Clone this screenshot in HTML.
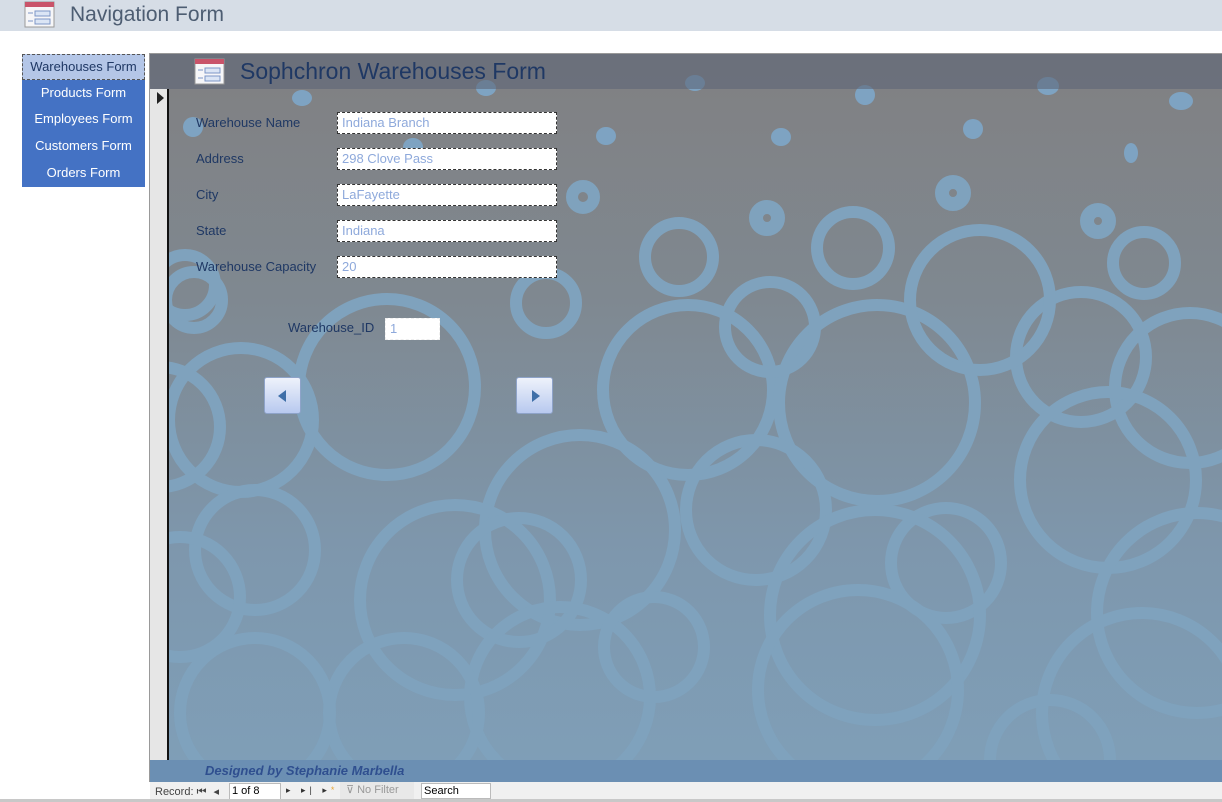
<!DOCTYPE html>
<html><head><meta charset="utf-8"><style>
body{margin:0;width:1222px;height:802px;position:relative;overflow:hidden;background:#fff;font-family:"Liberation Sans","DejaVu Sans",sans-serif}
.abs{position:absolute}
#top{left:0;top:0;width:1222px;height:31px;background:#d6dde6}
#top .t{left:70px;top:3px;font-size:21px;color:#4d5d72}
.nav{left:22px;width:123px;height:27px;line-height:26px;text-align:center;color:#fff;font-size:13px;background:#4472c4}
.lbl{font-size:13px;color:#1f3864;left:196px}
.box{left:337px;height:22px;background:#fff;border:1px dashed #333;font-size:13px;color:#8ea9db;line-height:20px;padding-left:4px;box-sizing:border-box;width:220px}
.btn{width:37px;height:37px;border:1px solid #8ea3c9;border-radius:3px;background:linear-gradient(#eef2fb,#b8c9ef);box-sizing:border-box}
</style></head><body>
<div id="top" class="abs">
<svg class="abs" style="left:24px;top:1px" width="32" height="28"><rect x="1" y="1" width="29" height="25" fill="#f6f6f8" stroke="#999"/><rect x="1" y="1" width="29" height="5" fill="#c9546a"/><rect x="11" y="10" width="15" height="5" fill="#dbe5f5" stroke="#7d97c6"/><rect x="11" y="18" width="15" height="5" fill="#dbe5f5" stroke="#7d97c6"/><line x1="4" y1="12" x2="9" y2="12" stroke="#7d97c6"/><line x1="4" y1="20" x2="9" y2="20" stroke="#7d97c6"/></svg>
<div class="abs t">Navigation Form</div></div>

<div class="abs nav" style="top:54px;background:#b4c6e7;color:#1f3864;border:1px dashed #555;box-sizing:border-box;height:26px;line-height:24px">Warehouses Form</div>
<div class="abs nav" style="top:80px">Products Form</div>
<div class="abs nav" style="top:106px">Employees Form</div>
<div class="abs nav" style="top:133px">Customers Form</div>
<div class="abs nav" style="top:160px">Orders Form</div>

<div class="abs" style="left:149px;top:53px;width:1073px;height:729px;border-top:1px solid #999;border-left:1px solid #999;box-sizing:border-box;background:linear-gradient(#808082 0px,#7f8890 240px,#7e97ad 500px,#7f9fb8 729px)"></div>
<svg class="abs" style="left:150px;top:54px" width="1072" height="706">
<g transform="translate(-150,-54)" fill="none" stroke="#7fa2bd" stroke-width="12">
<circle cx="387" cy="387" r="88"/><circle cx="688" cy="390" r="85"/><circle cx="877" cy="403" r="98"/>
<circle cx="1190" cy="388" r="75"/><circle cx="1081" cy="357" r="65"/><circle cx="770" cy="327" r="45"/>
<circle cx="546" cy="303" r="30"/><circle cx="194" cy="300" r="28"/><circle cx="241" cy="420" r="72"/>
<circle cx="580" cy="530" r="95"/><circle cx="1108" cy="480" r="88"/><circle cx="756" cy="510" r="70"/>
<circle cx="255" cy="550" r="60"/><circle cx="455" cy="600" r="95"/><circle cx="519" cy="580" r="62"/>
<circle cx="946" cy="563" r="55"/><circle cx="875" cy="615" r="105"/><circle cx="1197" cy="613" r="100"/>
<circle cx="858" cy="690" r="100"/><circle cx="560" cy="697" r="90"/><circle cx="654" cy="647" r="50"/>
<circle cx="404" cy="713" r="75"/><circle cx="255" cy="713" r="75"/><circle cx="1142" cy="713" r="100"/>
<circle cx="160" cy="427" r="60"/><circle cx="180" cy="597" r="60"/><circle cx="1050" cy="760" r="60"/>
<circle cx="679" cy="257" r="34"/><circle cx="853" cy="248" r="36"/><circle cx="980" cy="300" r="70"/>
<circle cx="1144" cy="263" r="31"/><circle cx="185" cy="285" r="30"/><circle cx="583" cy="197" r="11"/>
<circle cx="767" cy="218" r="11" stroke-width="14"/><circle cx="953" cy="193" r="11" stroke-width="14"/><circle cx="1098" cy="221" r="11" stroke-width="14"/>
</g>
<g transform="translate(-150,-54)" fill="#7ea3c2">
<ellipse cx="302" cy="98" rx="10" ry="8"/><ellipse cx="486" cy="88" rx="10" ry="8"/><ellipse cx="606" cy="136" rx="10" ry="9"/>
<ellipse cx="695" cy="83" rx="10" ry="8"/><ellipse cx="781" cy="137" rx="10" ry="9"/><ellipse cx="865" cy="95" rx="10" ry="10"/>
<ellipse cx="973" cy="129" rx="10" ry="10"/><ellipse cx="1048" cy="86" rx="11" ry="9"/><ellipse cx="1181" cy="101" rx="12" ry="9"/>
<ellipse cx="1131" cy="153" rx="7" ry="10"/><ellipse cx="193" cy="127" rx="10" ry="10"/><ellipse cx="413" cy="147" rx="10" ry="9"/>
</g>
<rect x="0" y="0" width="1072" height="35" fill="#5e6677" opacity="0.6"/>
</svg>
<svg class="abs" style="left:194px;top:58px" width="32" height="28"><rect x="1" y="1" width="29" height="25" fill="#f6f6f8" stroke="#999"/><rect x="1" y="1" width="29" height="5" fill="#c9546a"/><rect x="11" y="10" width="15" height="5" fill="#dbe5f5" stroke="#7d97c6"/><rect x="11" y="18" width="15" height="5" fill="#dbe5f5" stroke="#7d97c6"/><line x1="4" y1="12" x2="9" y2="12" stroke="#7d97c6"/><line x1="4" y1="20" x2="9" y2="20" stroke="#7d97c6"/></svg>
<div class="abs" style="left:240px;top:58px;font-size:23px;color:#1f3864">Sophchron Warehouses Form</div>

<div class="abs" style="left:150px;top:89px;width:19px;height:671px;background:#e6e6e6;border-right:2px solid #111;box-sizing:border-box"></div>
<div class="abs" style="left:157px;top:92px;width:0;height:0;border-left:7px solid #222;border-top:6px solid transparent;border-bottom:6px solid transparent"></div>

<div class="abs lbl" style="top:115px">Warehouse Name</div>
<div class="abs lbl" style="top:151px">Address</div>
<div class="abs lbl" style="top:187px">City</div>
<div class="abs lbl" style="top:223px">State</div>
<div class="abs lbl" style="top:259px">Warehouse Capacity</div>
<div class="abs box" style="top:112px">Indiana Branch</div>
<div class="abs box" style="top:148px">298 Clove Pass</div>
<div class="abs box" style="top:184px">LaFayette</div>
<div class="abs box" style="top:220px">Indiana</div>
<div class="abs box" style="top:256px">20</div>
<div class="abs lbl" style="left:288px;top:320px">Warehouse_ID</div>
<div class="abs box" style="left:385px;top:318px;width:55px;border-color:#eee">1</div>
<div class="abs btn" style="left:264px;top:377px"><div class="abs" style="left:13px;top:12px;border-right:8px solid #3f6fa8;border-top:6px solid transparent;border-bottom:6px solid transparent"></div></div>
<div class="abs btn" style="left:516px;top:377px"><div class="abs" style="left:15px;top:12px;border-left:8px solid #3f6fa8;border-top:6px solid transparent;border-bottom:6px solid transparent"></div></div>

<div class="abs" style="left:150px;top:760px;width:1072px;height:22px;background:#6b8fb3"></div>
<div class="abs" style="left:205px;top:763px;font-size:13px;font-weight:bold;font-style:italic;color:#2f4f8f">Designed by Stephanie Marbella</div>

<div class="abs" style="left:150px;top:782px;width:1072px;height:17px;background:#f0f0f0"></div>
<div class="abs" style="left:155px;top:785px;font-size:11px;color:#444">Record: <span style="letter-spacing:2px">⏮ ◂</span></div>
<div class="abs" style="left:229px;top:783px;width:48px;height:15px;background:#fff;border:1px solid #bbb;font-size:11px;line-height:15px;padding-left:2px">1 of 8</div>
<div class="abs" style="left:286px;top:785px;font-size:9px;color:#333;letter-spacing:4px">▸ ▸| ▸<span style="color:#e8a83a">*</span></div>
<div class="abs" style="left:340px;top:782px;width:74px;height:17px;background:#e8e8e8;font-size:11px;color:#999;line-height:17px;padding-left:6px;box-sizing:border-box">⊽ No Filter</div>
<div class="abs" style="left:421px;top:783px;width:70px;height:16px;background:#fff;border:1px solid #bbb;font-size:11px;line-height:14px;padding-left:2px;box-sizing:border-box">Search</div>
<div class="abs" style="left:0;top:799px;width:1222px;height:3px;background:#c8c8c8"></div>
</body></html>
